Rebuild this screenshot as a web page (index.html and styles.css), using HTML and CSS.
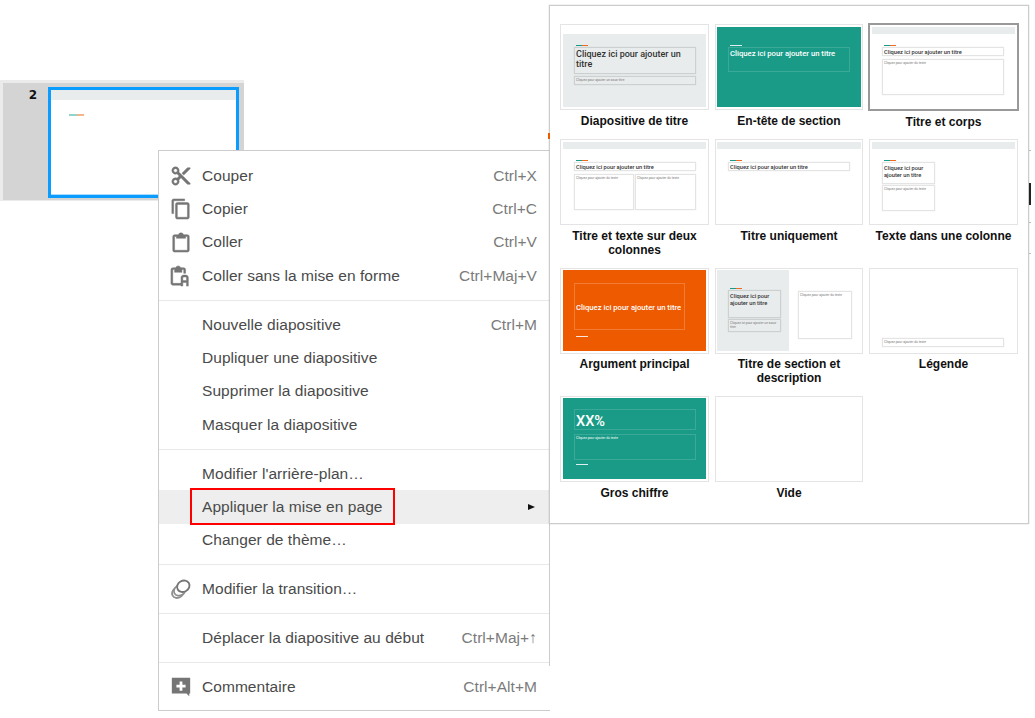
FILE: index.html
```html
<!DOCTYPE html>
<html lang="fr">
<head>
<meta charset="utf-8">
<title>Appliquer la mise en page</title>
<link rel="stylesheet" href="styles.css">
</head>
<body>
<div class="strip">
  <span class="strip-num">2</span>
  <div class="strip-thumb">
    <div class="strip-band"></div>
    <div class="accent strip-accent"></div>
  </div>
</div>

<div class="menu">
  <div class="group">
    <div class="row"><span class="ico"><svg class="bold" viewBox="0 0 24 24"><path d="M9.640 7.640c.23-.5.36-1.050.36-1.640 0-2.210-1.790-4-4-4S2 3.790 2 6s1.790 4 4 4c.59 0 1.140-.13 1.640-.36L10 12l-2.360 2.360C7.140 14.130 6.590 14 6 14c-2.210 0-4 1.790-4 4s1.790 4 4 4 4-1.790 4-4c0-.59-.13-1.140-.36-1.640L12 14l7 7h3v-1L9.640 7.640zM6 8c-1.100 0-2-.89-2-2s.9-2 2-2 2 .89 2 2-.9 2-2 2zm0 12c-1.100 0-2-.89-2-2s.9-2 2-2 2 .89 2 2-.9 2-2 2zM19 3l-6 6 2 2 7-7V3h-3z"/></svg></span><span class="lbl">Couper</span><span class="key">Ctrl+X</span></div>
    <div class="row"><span class="ico"><svg class="bold" viewBox="0 0 24 24"><path d="M16 1H4c-1.100 0-2 .9-2 2v14h2V3h12V1zm3 4H8c-1.100 0-2 .9-2 2v14c0 1.100.9 2 2 2h11c1.100 0 2-.9 2-2V7c0-1.100-.9-2-2-2zm0 16H8V7h11v14z"/></svg></span><span class="lbl">Copier</span><span class="key">Ctrl+C</span></div>
    <div class="row"><span class="ico"><svg class="bold" viewBox="0 0 24 24"><path d="M19 4h-4.180C14.400 2.840 13.300 2 12 2s-2.400.84-2.820 2H5c-1.100 0-2 .9-2 2v15c0 1.100.9 2 2 2h14c1.100 0 2-.9 2-2V6c0-1.100-.9-2-2-2zm0 17H5V6h2v2h10V6h2v15z"/></svg></span><span class="lbl">Coller</span><span class="key">Ctrl+V</span></div>
    <div class="row"><span class="ico"><svg class="bold" viewBox="0 0 24 24"><path d="M15 3h-3.200C11.400 1.900 10.300 1 9 1s-2.400.9-2.800 2H3c-1.100 0-2 .9-2 2v15c0 1.100.9 2 2 2h9v-2H3V5h2v3h8V5h2v4h2V5c0-1.100-.9-2-2-2zM15 11c-2 0-3 1.200-3 3v9h2v-4h4v4h2v-9c0-1.800-1-3-3-3h-2zm-1 6v-3c0-.7.400-1 1-1h2c.6 0 1 .3 1 1v3h-4z"/></svg></span><span class="lbl">Coller sans la mise en forme</span><span class="key">Ctrl+Maj+V</span></div>
  </div>
  <div class="sep"></div>
  <div class="group">
    <div class="row"><span class="ico"></span><span class="lbl">Nouvelle diapositive</span><span class="key">Ctrl+M</span></div>
    <div class="row"><span class="ico"></span><span class="lbl">Dupliquer une diapositive</span></div>
    <div class="row"><span class="ico"></span><span class="lbl">Supprimer la diapositive</span></div>
    <div class="row"><span class="ico"></span><span class="lbl">Masquer la diapositive</span></div>
  </div>
  <div class="sep"></div>
  <div class="group">
    <div class="row"><span class="ico"></span><span class="lbl">Modifier l'arrière-plan…</span></div>
    <div class="row row-active"><span class="ico"></span><span class="lbl">Appliquer la mise en page</span><span class="arrow"></span><span class="redbox"></span></div>
    <div class="row"><span class="ico"></span><span class="lbl">Changer de thème…</span></div>
  </div>
  <div class="sep"></div>
  <div class="group">
    <div class="row"><span class="ico"><svg class="rings" viewBox="0 0 24 24"><ellipse cx="8.500" cy="16" rx="6.500" ry="5.500" transform="rotate(-30 8.500 16)"/><ellipse cx="10.500" cy="13.500" rx="6.500" ry="5.500" transform="rotate(-30 10.500 13.500)"/><ellipse class="ring-top" cx="14.500" cy="9" rx="7" ry="6" transform="rotate(-30 14.500 9)"/></svg></span><span class="lbl">Modifier la transition…</span></div>
  </div>
  <div class="sep"></div>
  <div class="group">
    <div class="row"><span class="ico"></span><span class="lbl">Déplacer la diapositive au début</span><span class="key">Ctrl+Maj+↑</span></div>
  </div>
  <div class="sep"></div>
  <div class="group">
    <div class="row"><span class="ico"><svg viewBox="0 0 24 24"><path d="M2 2h20v17h-1v3l-3-3H2z"/><path d="M10.500 6h3v3.500H17v3h-3.500V16h-3v-3.500H7v-3h3.500z" fill="#fff"/></svg></span><span class="lbl">Commentaire</span><span class="key">Ctrl+Alt+M</span></div>
  </div>
</div>

<div class="mark"></div>
<div class="peek peek-block"></div>
<div class="peek peek-t1"></div>
<div class="peek peek-t2"></div>
<div class="peek peek-t3"></div>

<div class="layouts">
  <div class="grid">
    <div class="cell">
      <div class="card">
        <div class="fill fill-grey f-title"></div>
        <div class="accent a-1"></div>
        <div class="box box-dark b-title1"><span class="t t-lg">Cliquez ici pour ajouter un titre</span></div>
        <div class="box box-dark b-sub1"><span class="t t-xs">Cliquez pour ajouter un sous-titre</span></div>
      </div>
      <p class="name">Diapositive de titre</p>
    </div>
    <div class="cell">
      <div class="card card-shift">
        <div class="fill fill-teal f-full"></div>
        <div class="accent accent-white a-1"></div>
        <div class="box box-teal b-sec"><span class="t t-md t-white">Cliquez ici pour ajouter un titre</span></div>
      </div>
      <p class="name">En-tête de section</p>
    </div>
    <div class="cell">
      <div class="card card-on card-shift">
        <div class="fill fill-grey f-band"></div>
        <div class="accent a-1"></div>
        <div class="box b-title"><span class="t t-sm">Cliquez ici pour ajouter un titre</span></div>
        <div class="box b-body"><span class="t t-xs">Cliquez pour ajouter du texte</span></div>
      </div>
      <p class="name name-on">Titre et corps</p>
    </div>
    <div class="cell">
      <div class="card">
        <div class="fill fill-grey f-band"></div>
        <div class="accent a-1"></div>
        <div class="box b-title"><span class="t t-sm">Cliquez ici pour ajouter un titre</span></div>
        <div class="box b-col1"><span class="t t-xs">Cliquez pour ajouter du texte</span></div>
        <div class="box b-col2"><span class="t t-xs">Cliquez pour ajouter du texte</span></div>
      </div>
      <p class="name">Titre et texte sur deux colonnes</p>
    </div>
    <div class="cell">
      <div class="card card-shift">
        <div class="fill fill-grey f-band f-wide"></div>
        <div class="accent a-1"></div>
        <div class="box b-title"><span class="t t-sm">Cliquez ici pour ajouter un titre</span></div>
      </div>
      <p class="name">Titre uniquement</p>
    </div>
    <div class="cell">
      <div class="card card-shift">
        <div class="fill fill-grey f-band"></div>
        <div class="accent a-1"></div>
        <div class="box b-one"><span class="t t-sm">Cliquez ici pour ajouter un titre</span></div>
        <div class="box b-onebody"><span class="t t-xs">Cliquez pour ajouter du texte</span></div>
      </div>
      <p class="name">Texte dans une colonne</p>
    </div>
    <div class="cell">
      <div class="card">
        <div class="fill fill-orange f-low"></div>
        <div class="box box-orange b-main"><span class="t t-md t-white">Cliquez ici pour ajouter un titre</span></div>
        <div class="accent accent-white a-main"></div>
      </div>
      <p class="name name-low">Argument principal</p>
    </div>
    <div class="cell">
      <div class="card card-shift">
        <div class="fill fill-grey f-half"></div>
        <div class="accent a-half"></div>
        <div class="box box-dark b-halft"><span class="t t-sm">Cliquez ici pour ajouter un titre</span></div>
        <div class="box box-dark b-halfs"><span class="t t-xs t-wrap">Cliquez ici pour ajouter un sous-titre</span></div>
        <div class="box b-halfr"><span class="t t-xs">Cliquez pour ajouter du texte</span></div>
      </div>
      <p class="name name-low">Titre de section et description</p>
    </div>
    <div class="cell">
      <div class="card card-shift">
        <div class="box b-leg"><span class="t t-xs">Cliquez pour ajouter du texte</span></div>
      </div>
      <p class="name name-low">Légende</p>
    </div>
    <div class="cell">
      <div class="card">
        <div class="fill fill-teal f-low"></div>
        <div class="box box-teal b-num"><span class="t t-xx">xx%</span></div>
        <div class="box box-teal b-numt"><span class="t t-xs t-white">Cliquez pour ajouter du texte</span></div>
        <div class="accent accent-white a-num"></div>
      </div>
      <p class="name">Gros chiffre</p>
    </div>
    <div class="cell">
      <div class="card"></div>
      <p class="name">Vide</p>
    </div>
  </div>
</div>
</body>
</html>
```
FILE: styles.css
```css
* { box-sizing: border-box; }
html, body { margin: 0; padding: 0; height: 100%; background: #fff; overflow: hidden; }
body { position: relative; font-family: "Liberation Sans", Arial, sans-serif; }

.accent { position: absolute; width: 15px; height: 1px; background: linear-gradient(90deg, #1a9b87 50%, #ee6a1f 50%); }

.strip {
  position: absolute; left: 0; top: 80px; width: 244px; height: 121px;
  background: #d4d4d4; border: solid #ebebeb; border-width: 3px 0 1px 3px;
  display: flex;
}
.strip-num { width: 34px; padding-top: 4px; text-align: right; font: bold 12px/16px "DejaVu Sans", sans-serif; color: #111; }
.strip-thumb { position: relative; width: 191px; height: 111px; margin: 4px 0 0 11px; background: #fff; border: 3px solid #0a9cff; box-shadow: inset 0 -1px 0 #a9dcff; }
.strip-band { height: 10px; background: #e9ecec; }
.strip-accent { left: 18px; top: 24px; height: 2px; background: linear-gradient(90deg, #8fd5cc 50%, #f7b48c 50%); }

.menu {
  position: absolute; left: 158px; top: 150px; width: 392px; height: 561px;
  background: #fff; border: 1px solid #ccc; padding-top: 8px; color: #444;
}
.menu::after { content: ""; position: absolute; right: -1px; bottom: 0; width: 1px; height: 44px; background: #fff; }
.row { position: relative; display: flex; align-items: center; height: 33.33px; font-size: 15.500px; letter-spacing: .05px; padding: 0 12px 0 11px; }
.row-active { background: #eee; }
.ico { width: 32px; height: 24px; flex: none; }
.ico svg { width: 22px; height: 22px; display: block; margin-top: 1px; fill: #757575; }
.ico svg.bold { stroke: #757575; stroke-width: .5; }
.ico svg.rings { fill: #fff; stroke: #8f8f8f; stroke-width: 2; }
.ring-top { stroke: #757575; }
.lbl { flex: 1; white-space: nowrap; color: #4a4a4a; }
.key { color: #7b7b7b; }
.sep { height: 1px; margin: 7.35px 0; background: #e9e9e9; }
.arrow { width: 0; height: 0; border-left: 7px solid #111; border-top: 3.500px solid transparent; border-bottom: 3.500px solid transparent; margin-right: 2px; }
.redbox { position: absolute; left: 31px; top: -2px; width: 205px; height: 37px; border: 2px solid #f00; }

.mark { position: absolute; left: 548px; top: 133px; width: 2px; height: 6px; background: #ee5a00; z-index: 2; }
.peek { position: absolute; left: 1029px; width: 1.500px; background: #bbb; height: 1px; z-index: 2; }
.peek-block { top: 183px; height: 22px; background: #222; }
.peek-t1 { top: 150px; }
.peek-t2 { top: 222px; }
.peek-t3 { top: 253px; }

.layouts {
  position: absolute; left: 549px; top: 5px; width: 480px; height: 519px;
  background: #fff; border: 1px solid #ccc; padding: 18px 0 0 10px; box-shadow: 0 0 1px rgba(0, 0, 0, .3);
}
.grid { display: grid; grid-template-columns: 149px 148px 149px; column-gap: 6px; grid-template-rows: 115px 129px 128px auto; }
.card { position: relative; height: 86px; border: 1px solid #e4e4e4; background: #fff; overflow: hidden; }
.card-on { outline: 2px solid #999; outline-offset: -1px; overflow: visible; }
.card-shift > .box, .card-shift > .accent { margin-left: -1px; }
.name { margin: 4px 0 0; font: bold 12px/14px "Liberation Sans", Arial, sans-serif; color: #111; text-align: center; }
.name-on { margin-top: 5px; }
.name-low { margin-top: 3px; }

.fill { position: absolute; }
.fill-grey { background: #e9ecec; }
.fill-teal { background: #1a9b87; }
.fill-orange { background: #ee5a00; }
.f-title { left: 2px; right: 2px; top: 9px; bottom: 2px; }
.f-full { left: 1px; right: 1px; top: 2px; bottom: 2px; }
.f-band { left: 1.500px; right: 2px; top: 2px; height: 7px; }
.f-wide { left: 1px; right: 1px; }
.f-low { left: 2px; right: 2px; top: 1px; bottom: 2px; }
.f-half { left: 1px; top: 1px; bottom: 2px; width: 72px; }

.accent-white { background: #fff; opacity: .85; }
.a-1 { left: 15px; top: 20px; width: 12px; }
.a-main { left: 15px; top: 67px; width: 12px; }
.a-half { left: 15px; top: 19px; width: 12px; }
.a-num { left: 15px; top: 67px; width: 12px; }

.box { position: absolute; border: 1px solid #e4e4e4; padding: 1px 1px 0 1px; font-family: "Roboto", sans-serif; box-shadow: 0 0 1px rgba(0, 0, 0, .12); }
.box-dark { border-color: #ccd0d0; }
.box-teal { border-color: #3aa998; box-shadow: none; }
.box-orange { border-color: #f27c33; box-shadow: none; }
.b-title1 { left: 13px; top: 22px; width: 122px; height: 27px; }
.b-sub1 { left: 13px; top: 51px; width: 122px; height: 9px; }
.b-sec { left: 13px; top: 22px; width: 122px; height: 25px; }
.b-title { left: 13px; top: 22px; width: 122px; height: 9px; padding-top: 1px; }
.b-body { left: 13px; top: 34px; width: 122px; height: 36px; }
.b-col1 { left: 13px; top: 34px; width: 60px; height: 36px; }
.b-col2 { left: 74px; top: 34px; width: 61px; height: 36px; }
.b-one { left: 13px; top: 22px; width: 53px; height: 22px; padding-top: 2px; }
.b-onebody { left: 13px; top: 45px; width: 53px; height: 26px; }
.b-main { left: 13px; top: 14px; width: 111px; height: 47px; display: flex; align-items: center; }
.b-halft { left: 13px; top: 21px; width: 53px; height: 28px; padding-top: 2px; }
.b-halfs { left: 13px; top: 50px; width: 53px; height: 13px; }
.b-halfr { left: 83px; top: 22px; width: 54px; height: 48px; }
.b-leg { left: 13px; top: 69px; width: 122px; height: 9px; }
.b-num { left: 13px; top: 12px; width: 122px; height: 21px; padding-top: 3px; }
.b-numt { left: 13px; top: 37px; width: 122px; height: 26px; }

.t { display: block; color: #333; }
.t-lg { font-size: 9px; line-height: 10px; font-weight: 500; }
.t-md { font-size: 7.700px; line-height: 9px; font-weight: 500; white-space: nowrap; }
.t-sm { font-size: 5.700px; line-height: 7px; font-weight: 500; }
.t-xs { font-size: 3.300px; line-height: 4px; color: #777; white-space: nowrap; }
.t-wrap { white-space: normal; }
.t-white { color: #fff; }
.t-xx { font-size: 14.500px; line-height: 17px; font-weight: 500; color: #fff; text-transform: uppercase; }
```
